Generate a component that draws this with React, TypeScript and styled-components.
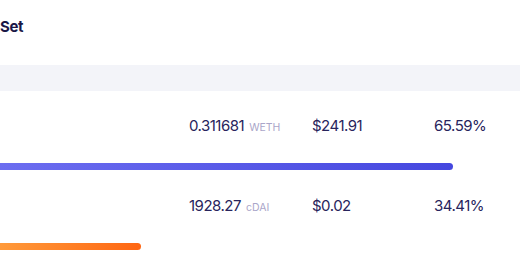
import React from 'react';
import styled, { createGlobalStyle } from 'styled-components';

const GlobalStyle = createGlobalStyle`
  html, body {
    margin: 0;
    padding: 0;
    background: #ffffff;
  }
  body {
    font-family: Inter, "Liberation Sans", sans-serif;
    color: #1f1b4d;
    width: 520px;
    height: 272px;
    overflow: hidden;
  }
`;

const Panel = styled.div`
  width: 520px;
  display: flex;
  flex-direction: column;
`;

const Header = styled.div`
  height: 65px;
  box-sizing: border-box;
  padding-top: 17px;
`;

const Title = styled.h2`
  margin: 0;
  font-size: 15px;
  line-height: 20px;
  font-weight: 700;
  letter-spacing: -0.4px;
  color: #1a1747;
`;

const HeadBand = styled.div`
  height: 26px;
  background: #f3f4f9;
`;

const Row = styled.div`
  box-sizing: border-box;
  height: 80px;
  padding-top: 25px;
  display: flex;
  flex-direction: column;
  gap: 25px;
`;

const Cells = styled.div`
  display: grid;
  grid-template-columns: 189px 123px 122px 1fr;
  font-size: 15px;
  line-height: 20px;
  letter-spacing: -0.5px;
  color: #28245c;
`;

const Cell = styled.div`
  white-space: nowrap;
`;

const Unit = styled.span`
  margin-left: 5px;
  font-size: 10.5px;
  letter-spacing: 0;
  color: #aaa6c9;
`;

const Track = styled.div`
  height: 7px;
`;

const Bar = styled.div<{ $from: string; $to: string }>`
  height: 100%;
  border-radius: 0 4px 4px 0;
  background: linear-gradient(90deg, ${(p) => p.$from}, ${(p) => p.$to});
`;

interface Holding {
  amount: string;
  unit: string;
  value: string;
  share: string;
  width: number;
  from: string;
  to: string;
}

const holdings: Holding[] = [
  { amount: '0.311681', unit: 'WETH', value: '$241.91', share: '65.59%', width: 453, from: '#6c6df0', to: '#4547df' },
  { amount: '1928.27', unit: 'cDAI', value: '$0.02', share: '34.41%', width: 141, from: '#ff9a3a', to: '#ff6612' },
];

const App: React.FC = () => (
  <>
    <GlobalStyle />
    <Panel>
      <Header>
        <Title>Set</Title>
      </Header>
      <HeadBand />
      {holdings.map((h) => (
        <Row key={h.unit}>
          <Cells>
            <Cell />
            <Cell>
              {h.amount}
              <Unit>{h.unit}</Unit>
            </Cell>
            <Cell>{h.value}</Cell>
            <Cell>{h.share}</Cell>
          </Cells>
          <Track>
            <Bar $from={h.from} $to={h.to} style={{ width: h.width }} />
          </Track>
        </Row>
      ))}
    </Panel>
  </>
);

export default App;
